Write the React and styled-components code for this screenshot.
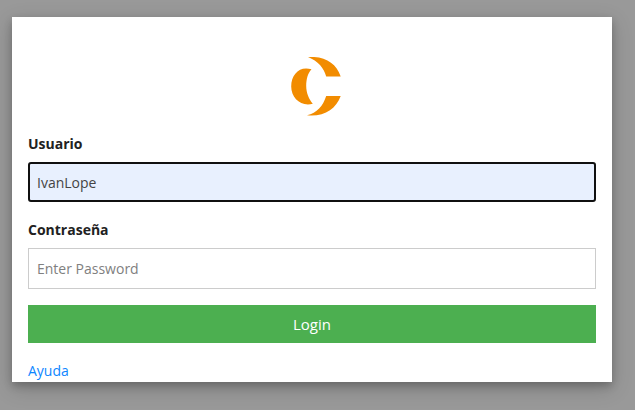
import React from 'react'
import styled, { createGlobalStyle } from 'styled-components'

const GlobalStyle = createGlobalStyle`
    html, body {
        margin: 0;
        height: 100%;
        overflow: hidden;
        background: #999999;
    }
    #root {
        height: 100%;
    }
`

const Overlay = styled.div`
    box-sizing: border-box;
    height: 410px;
    padding: 17px 23px 0 12px;
    background: #999999;
    font-family: "Open Sans", "Noto Sans", sans-serif;
`

const Modal = styled.form`
    box-sizing: border-box;
    width: 600px;
    height: 365px;
    padding: 40px 16px 0;
    background: #ffffff;
    overflow: hidden;
    box-shadow: 0 4px 8px rgba(0, 0, 0, 0.2), 0 6px 20px rgba(0, 0, 0, 0.19);
`

const LogoRow = styled.div`
    display: flex;
    justify-content: center;
    height: 60px;
    padding-left: 8px;
    margin-bottom: 16px;
`

const Label = styled.label`
    display: block;
    height: 29px;
    line-height: 22px;
    font-size: 14px;
    font-weight: 700;
    color: #212121;
`

const Field = styled.div`
    height: ${props => props.$height}px;
`

const Input = styled.input`
    box-sizing: border-box;
    display: block;
    width: 100%;
    height: ${props => props.$focused ? 40 : 41}px;
    padding: 0 ${props => props.$focused ? 7 : 8}px;
    font-family: inherit;
    font-size: 14px;
    color: #444444;
    background: ${props => props.$focused ? '#e8f0fe' : '#ffffff'};
    border: ${props => props.$focused ? '2px solid #101010' : '1px solid #cccccc'};
    border-radius: ${props => props.$focused ? '3px' : '0'};
    outline: none;

    &::placeholder {
        color: #808080;
        opacity: 1;
    }
`

const LoginButton = styled.button`
    display: block;
    width: 100%;
    height: 38px;
    margin-bottom: 16px;
    padding: 0;
    border: none;
    background: #4caf50;
    color: #ffffff;
    font-family: inherit;
    font-size: 15px;
`

const HelpLink = styled.a`
    font-size: 14px;
    line-height: 20px;
    color: #0d86ff;
    text-decoration: none;
`

const Logo = () => (
    <svg width="51" height="60" viewBox="0 0 51 60" aria-hidden="true">
        <g fill="#f28c00">
            <path d="M20.5 12.3C9 8.5 0.2 17 0.2 29.5C0.2 41 10 50 21.8 46.7C18 42 15.2 36 15.2 29C15.2 22 17 16 20.5 12.3Z" />
            <path d="M17 0C34 -1 45 6 49.7 19.5H35.2C33 11 27 4 17 0Z" />
            <path d="M49.7 39C45 52 33 60 16 58.3C26 56 32 49 35.2 39Z" />
        </g>
    </svg>
)

const App = () => {
    return (
        <Overlay>
            <GlobalStyle />
            <Modal>
                <LogoRow>
                    <Logo />
                </LogoRow>
                <Field $height={86}>
                    <Label htmlFor="user">Usuario</Label>
                    <Input id="user" $focused defaultValue="IvanLope" />
                </Field>
                <Field $height={70}>
                    <Label htmlFor="pass">Contraseña</Label>
                    <Input id="pass" type="password" placeholder="Enter Password" />
                </Field>
                <Field $height={16} />
                <LoginButton type="button">Login</LoginButton>
                <HelpLink href="#">Ayuda</HelpLink>
            </Modal>
        </Overlay>
    )
}

export default App
